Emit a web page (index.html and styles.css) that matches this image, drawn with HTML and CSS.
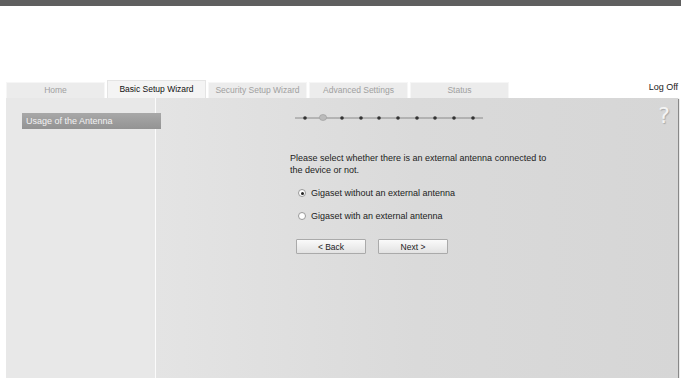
FILE: index.html
```html
<!DOCTYPE html>
<html lang="en">
<head>
    <meta charset="UTF-8">
    <title>Basic Setup Wizard</title>
    <link rel="stylesheet" href="styles.css">
</head>
<body>
<div class="topbar"></div>
<div class="nav">
    <div class="tab">Home</div>
    <div class="tab active">Basic Setup Wizard</div>
    <div class="tab">Security Setup Wizard</div>
    <div class="tab">Advanced Settings</div>
    <div class="tab">Status</div>
    <div class="logoff">Log Off</div>
</div>
<div class="panel">
    <div class="sidebar">
        <div class="side-item">Usage of the Antenna</div>
    </div>
    <div class="main">
        <div class="help">?</div>
        <!-- wizard steps -->
        <svg class="steps" width="190" height="10" viewBox="0 0 190 10">
            <line x1="0" y1="5" x2="188" y2="5" stroke="#777" stroke-width="0.8"/>
            <circle cx="10" cy="5" r="1.8" fill="#333"/>
            <ellipse cx="28" cy="4.5" rx="3.6" ry="3" fill="#bbb" stroke="#999" stroke-width="0.6"/>
            <circle cx="47" cy="5" r="1.8" fill="#333"/>
            <circle cx="66" cy="5" r="1.8" fill="#333"/>
            <circle cx="84" cy="5" r="1.8" fill="#333"/>
            <circle cx="103" cy="5" r="1.8" fill="#333"/>
            <circle cx="122" cy="5" r="1.8" fill="#333"/>
            <circle cx="140" cy="5" r="1.8" fill="#333"/>
            <circle cx="159" cy="5" r="1.8" fill="#333"/>
            <circle cx="178" cy="5" r="1.8" fill="#333"/>
        </svg>
        <div class="content">
            <p class="intro">Please select whether there is an external antenna connected to the device or not.</p>
            <label class="radio"><span class="dot checked"></span>Gigaset without an external antenna</label>
            <label class="radio"><span class="dot"></span>Gigaset with an external antenna</label>
            <div class="buttons">
                <button class="btn">&lt; Back</button>
                <button class="btn">Next &gt;</button>
            </div>
        </div>
    </div>
</div>
</body>
</html>
```

FILE: styles.css
```css
body {
    margin: 0;
    background: #fff;
    font-family: 'Liberation Sans', Arial, sans-serif;
    color: #222;
}
.topbar {
    height: 6px;
    background: #5f5f5f;
}
.nav {
    display: flex;
    align-items: flex-end;
    gap: 2px;
    margin-top: 74px;
    padding: 0 3px 0 6px;
    height: 18px;
}
.tab {
    width: 99px;
    height: 16px;
    background: #ececec;
    border: 1px solid #f6f6f6;
    border-bottom: none;
    box-sizing: border-box;
    color: #a0a0a0;
    font-size: 8.5px;
    line-height: 15px;
    text-align: center;
}
.tab.active {
    height: 18px;
    background: #f4f4f4;
    border-color: #e4e4e4;
    color: #111;
    line-height: 17px;
}
.logoff {
    margin-left: auto;
    align-self: flex-start;
    font-size: 9px;
    color: #222;
    padding-top: 2px;
}
.panel {
    display: flex;
    height: 280px;
    margin: 0 3px 0 6px;
    box-shadow: 1px 1px 1px #888;
}
.sidebar {
    width: 149px;
    background: #e8e8e8;
    border-right: 1px solid #fbfbfb;
    padding-top: 15px;
    position: relative;
    z-index: 1;
}
.side-item {
    margin-left: 16px;
    width: 139px;
    height: 16px;
    box-sizing: border-box;
    padding-left: 4px;
    background: linear-gradient(#a8a8a8, #939393);
    color: #f2f2f2;
    font-size: 9px;
    line-height: 16px;
}
.main {
    flex: 1;
    position: relative;
    background: linear-gradient(90deg, #e4e4e4 0%, #dadada 50%, #d6d6d6 100%);
    padding-top: 15px;
}
.help {
    position: absolute;
    right: 8px;
    top: 5px;
    font-size: 22px;
    color: #f4f4f4;
    text-shadow: 1px 1px 1px #aaa;
    font-family: 'DejaVu Sans', sans-serif;
}
.steps {
    display: block;
    margin-left: 139px;
}
.content {
    margin-left: 134px;
    padding-top: 29px;
    width: 262px;
}
.intro {
    margin: 0 0 11px;
    font-size: 9px;
    line-height: 12px;
}
.radio {
    display: flex;
    align-items: center;
    font-size: 9px;
    height: 12px;
    margin: 0 0 11px 8px;
}
.dot {
    width: 6px;
    height: 6px;
    border-radius: 50%;
    background: #fff;
    border: 1px solid #999;
    margin-right: 5px;
    position: relative;
}
.dot.checked::after {
    content: "";
    position: absolute;
    left: 1.5px;
    top: 1.5px;
    width: 3px;
    height: 3px;
    border-radius: 50%;
    background: #222;
}
.buttons {
    display: flex;
    gap: 12px;
    margin-left: 6px;
    margin-top: 17px;
}
.btn {
    width: 70px;
    height: 15px;
    padding: 0;
    font-family: 'Liberation Sans', Arial, sans-serif;
    font-size: 8.5px;
    color: #222;
    background: linear-gradient(#fafafa, #e2e2e2);
    border: 1px solid #aaa;
    border-radius: 1px;
}
```
